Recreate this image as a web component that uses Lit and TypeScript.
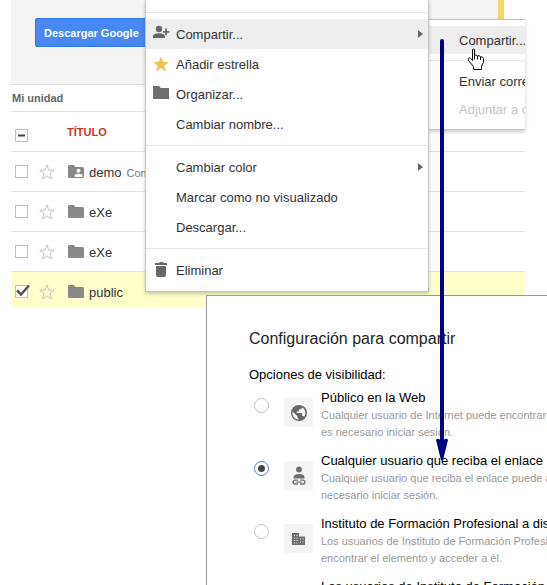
import { LitElement, html, css, svg, nothing } from "lit";
import { customElement } from "lit/decorators.js";
import { classMap } from "lit/directives/class-map.js";

const FOLDER = "M0 1.5Q0 0 1.5 0H5.5L7.5 2H14.500Q16 2 16 3.500V11.500Q16 13 14.500 13H1.500Q0 13 0 11.500Z";

const folder = html`<svg class="folder" viewBox="0 0 16 13" width="16" height="13"><path d=${FOLDER} /></svg>`;

const sharedFolder = html`<svg class="folder" viewBox="0 0 16 13" width="16" height="13">
  <path d=${FOLDER} />
  <circle cx="10.500" cy="5.800" r="2" fill="#fff" />
  <path d="M6.500 12V11Q6.500 8.800 10.500 8.800T14.500 11V12Z" fill="#fff" />
</svg>`;

const STAR = "M8 1L9.900 6.100L15.300 6.300L11 9.700L12.500 15L8 11.900L3.500 15L5 9.700L.7 6.300L6.100 6.100Z";

const icons: Record<string, unknown> = {
  share: svg`<g fill="#686868"><circle cx="6" cy="3" r="3.200"/><path d="M0 12V10.500C0 8 3.500 7.300 6 7.300S12 8 12 10.500V12Z"/><path d="M12.200 2.500H14V5H16.500V6.800H14V9.200H12.200V6.800H10V5H12.200Z"/></g>`,
  star: svg`<path d=${STAR} fill="#eec556" stroke="#eec556" stroke-width=".6"/>`,
  folder: svg`<path d="M0 0H6L8 2H16V13H0Z" fill="#6e6e6e"/>`,
  trash: svg`<path d="M2 1H6L7 0H10L11 1H14V3H2ZM3 4H13V13Q13 15 11 15H5Q3 15 3 13Z" fill="#686868"/>`,
  globe: svg`<circle cx="8" cy="8" r="8" fill="#666"/><path d="M1.600 6.500L6.500 11.200V12.500Q6.800 13.400 7.500 13.600V14.600Q3.800 14.200 2 11Q1.100 8.800 1.600 6.500ZM10.300 1.900Q13 2.900 14.200 6Q15 9 13.300 11.800Q12.800 11 11.900 11H11.200V8.800Q11.200 8.100 10.400 8.100H5.700V6.500H7.200Q8 6.500 8 5.700V4.200H9.500Q10.900 4.100 10.900 2.700Z" fill="#f4f4f4"/>`,
  link: svg`<g fill="#6e6e6e"><circle cx="8" cy="1.500" r="2.900"/><path d="M2.500 10.500V9Q3 6 8 6T13.500 9V10.500Z"/></g><g fill="none" stroke="#6e6e6e" stroke-width="1.300"><path d="M7 12.200H4A1.900 1.900 0 0 0 4 16H7M9 12.200H12A1.900 1.900 0 0 1 12 16H9M5.500 14.100H10.500"/></g>`,
  building: svg`<path d="M1 2H8V5.500H14V14H1Z" fill="#6e6e6e"/><path d="M3 4h1v1h-1zM5.500 4h1v1h-1zM3 6.500h1v1h-1zM5.500 6.500h1v1h-1zM3 9h1v1h-1zM5.500 9h1v1h-1zM3 11.500h1v1h-1zM5.500 11.500h1v1h-1zM9 7.500h1v1h-1zM11.500 7.500h1v1h-1zM9 10.500h1v1h-1zM11.500 10.500h1v1h-1z" fill="#f4f4f4"/>`,
};

const icon = (name: string) =>
  html`<svg class="glyph" viewBox="0 0 16 16" width="16" height="16" aria-hidden="true">${icons[name]}</svg>`;

interface Item {
  label: string;
  icon?: string;
  more?: boolean;
  active?: boolean;
  disabled?: boolean;
}

const MENU: Item[][] = [
  [
    { label: "Compartir...", icon: "share", more: true, active: true },
    { label: "Añadir estrella", icon: "star" },
    { label: "Organizar...", icon: "folder" },
    { label: "Cambiar nombre..." },
  ],
  [
    { label: "Cambiar color", more: true },
    { label: "Marcar como no visualizado" },
    { label: "Descargar..." },
  ],
  [{ label: "Eliminar", icon: "trash" }],
];

const SUBMENU: Item[][] = [
  [{ label: "Compartir...", active: true }],
  [{ label: "Enviar correo a los colaboradores" }, { label: "Adjuntar a correo electrónico", disabled: true }],
];

const FILES = [
  { name: "demo", note: "Compartido", shared: true },
  { name: "eXe" },
  { name: "eXe" },
  { name: "public", selected: true },
];

const OPTIONS = [
  {
    icon: "globe",
    title: "Público en la Web",
    lines: ["Cualquier usuario de Internet puede encontrar el elemento", "es necesario iniciar sesión."],
  },
  {
    icon: "link",
    title: "Cualquier usuario que reciba el enlace",
    lines: ["Cualquier usuario que reciba el enlace puede acceder", "necesario iniciar sesión."],
    checked: true,
  },
  {
    icon: "building",
    title: "Instituto de Formación Profesional a distancia",
    lines: ["Los usuarios de Instituto de Formación Profesional", "encontrar el elemento y acceder a él."],
  },
  {
    icon: "link",
    title: "Los usuarios de Instituto de Formación Profesional",
    lines: ["Los usuarios de Instituto de Formación Profesional", "acceder a él."],
  },
];

@customElement("context-menu")
export class ContextMenu extends LitElement {
  static properties = { groups: { attribute: false }, compact: { type: Boolean, reflect: true } };
  declare groups: Item[][];
  declare compact: boolean;

  static styles = css`
    :host {
      display: block;
      box-sizing: border-box;
      background: #fff;
      border: 1px solid #c4c4c4;
      box-shadow: 0 2px 4px rgba(0, 0, 0, 0.2);
      overflow: hidden;
    }
    .group {
      padding: 6px 0;
    }
    .group + .group {
      border-top: 1px solid #e5e5e5;
    }
    .item {
      display: grid;
      grid-template-columns: 23px 1fr auto;
      align-items: center;
      width: 100%;
      height: 30px;
      padding: 0 5px 0 7px;
      border: 0;
      background: none;
      font: 13px "Liberation Sans", Arial, sans-serif;
      color: #333;
      text-align: left;
      white-space: nowrap;
    }
    :host([compact]) .item {
      height: 28px;
      grid-template-columns: 1fr;
      padding-left: 30px;
    }
    .item.active {
      background: #eee;
    }
    .item:disabled {
      color: #c4c4c4;
    }
    .glyph {
      display: block;
      overflow: visible;
    }
    .more {
      border: 4px solid transparent;
      border-left: 5px solid #666;
      border-right: 0;
    }
  `;

  render() {
    return this.groups.map(
      (group) => html`<div class="group">
        ${group.map(
          (item) => html`<button class=${classMap({ item: true, active: !!item.active })} ?disabled=${item.disabled}>
            ${this.compact ? nothing : html`<span>${item.icon ? icon(item.icon) : nothing}</span>`}
            <span>${item.label}</span>
            ${item.more ? html`<span class="more"></span>` : nothing}
          </button>`
        )}
      </div>`
    );
  }
}

@customElement("share-dialog")
export class ShareDialog extends LitElement {
  static styles = css`
    :host {
      display: block;
      box-sizing: border-box;
      background: #fff;
      border: 1px solid #999;
      border-width: 1px 0 0 1px;
      padding: 33px 0 0 42px;
      overflow: hidden;
      white-space: nowrap;
      color: #000;
    }
    h1 {
      margin: 0;
      font-size: 16px;
      line-height: 20px;
      font-weight: 400;
      color: #222;
    }
    fieldset {
      margin: 16px 0 0;
      padding: 0;
      border: 0;
      min-width: 0;
    }
    legend {
      padding: 0;
      font-size: 13px;
      line-height: 20px;
    }
    .option {
      display: grid;
      grid-template-columns: 35px 37px 1fr;
      height: 63px;
      padding-top: 4px;
      box-sizing: border-box;
    }
    input {
      appearance: none;
      width: 15px;
      height: 15px;
      margin: 9px 0 0 5px;
      border: 1px solid #c2c2c2;
      border-radius: 50%;
      background: #fff;
    }
    input:checked {
      border-color: #4d7fc9;
      background: radial-gradient(circle, #444 3px, #fff 4px);
    }
    .tile {
      display: grid;
      place-items: center;
      width: 29px;
      height: 29px;
      margin-top: 9px;
      background: #f4f4f4;
    }
    .glyph {
      display: block;
      overflow: visible;
    }
    .title {
      display: block;
      font-size: 13px;
      line-height: 18px;
    }
    .line {
      display: block;
      font-size: 11px;
      line-height: 17px;
      color: #999;
    }
  `;

  render() {
    return html`
      <h1>Configuración para compartir</h1>
      <fieldset>
        <legend>Opciones de visibilidad:</legend>
        ${OPTIONS.map(
          (o) => html`<label class="option">
            <input type="radio" name="visibility" .checked=${!!o.checked} />
            <span class="tile">${icon(o.icon)}</span>
            <span><span class="title">${o.title}</span>${o.lines.map((l) => html`<span class="line">${l}</span>`)}</span>
          </label>`
        )}
      </fieldset>
    `;
  }
}

@customElement("app-root")
export class AppRoot extends LitElement {
  static styles = css`
    :host {
      display: block;
      position: relative;
      height: 100vh;
      overflow: hidden;
      background: #fff;
      font-family: "Liberation Sans", Arial, sans-serif;
      font-size: 13px;
      color: #333;
    }
    .page {
      margin: 0 22px 0 11px;
    }
    .promo {
      display: flex;
      align-items: center;
      box-sizing: border-box;
      height: 85px;
      margin-right: 21px;
      padding: 0 0 19px 24px;
      background: #f4f4f4;
      border-right: 6px solid #f5d76c;
      border-bottom: 1px solid #ddd;
    }
    .download {
      height: 29px;
      padding: 0 24px 0 8px;
      border: 1px solid #3079ed;
      border-radius: 2px;
      background: #4788f4;
      color: #fff;
      font: bold 11px "Liberation Sans", Arial, sans-serif;
      white-space: nowrap;
    }
    h2 {
      margin: 0;
      padding-left: 1px;
      font-size: 11px;
      line-height: 26px;
      color: #666;
    }
    table {
      width: 100%;
      border-collapse: collapse;
      table-layout: fixed;
    }
    tr {
      height: 40px;
    }
    th,
    td {
      box-sizing: border-box;
      padding: 0;
      border-top: 1px solid #e0e0e0;
      text-align: left;
    }
    th {
      font-size: 11px;
      color: #c53727;
    }
    .pick {
      width: 27px;
      padding-left: 4px;
    }
    th.pick {
      padding-top: 7px;
    }
    .fav {
      width: 29px;
      padding-left: 1px;
    }
    .selected {
      background: #ffffcb;
      height: 36px;
    }
    .selected td {
      padding-top: 4px;
    }
    input {
      appearance: none;
      display: block;
      box-sizing: border-box;
      width: 13px;
      height: 13px;
      margin: 0;
      border: 1px solid #c0c0c0;
      background: #fff;
    }
    .box {
      display: grid;
      width: 15px;
    }
    .box > * {
      grid-area: 1 / 1;
    }
    .box svg {
      overflow: visible;
      pointer-events: none;
    }
    .star {
      display: block;
      border: 0;
      padding: 0;
      background: none;
    }
    svg {
      display: block;
    }
    .folder {
      fill: #888;
    }
    .name {
      display: flex;
      align-items: flex-start;
      gap: 5px;
      padding: 2px 0 0 1px;
      line-height: 16px;
    }
    .note {
      font-size: 11px;
      color: #777;
    }
    context-menu,
    share-dialog,
    .pointer,
    .arrow {
      position: absolute;
    }
    .submenu {
      top: 19px;
      left: 428px;
      right: 22px;
      border-right: 0;
    }
    .main {
      top: 0;
      left: 145px;
      width: 284px;
      border-top: 0;
    }
    share-dialog {
      top: 295px;
      left: 206px;
      right: 0;
      bottom: 0;
    }
    .arrow {
      top: 38px;
      left: 435px;
    }
    .pointer {
      top: 48px;
      left: 467px;
    }
  `;

  render() {
    return html`
      <main class="page">
        <div class="promo"><button class="download">Descargar Google</button></div>
        <h2>Mi unidad</h2>
        <table>
          <thead>
            <tr>
              <th class="pick">
                <span class="box"><input type="checkbox" aria-label="Seleccionar todo" />
                  <svg width="13" height="13"><path d="M3 6.500H10" stroke="#444" stroke-width="2" /></svg></span>
              </th>
              <th class="fav"></th>
              <th>TÍTULO</th>
            </tr>
          </thead>
          <tbody>
            ${FILES.map(
              (f) => html`<tr class=${classMap({ selected: !!f.selected })}>
                <td class="pick">
                  <span class="box"><input type="checkbox" aria-label=${f.name} .checked=${!!f.selected} />
                    ${f.selected
                      ? html`<svg width="13" height="13"><path d="M2 5.500L6 9.500L14 .5" fill="none" stroke="#555" stroke-width="2.500" /></svg>`
                      : nothing}</span>
                </td>
                <td class="fav">
                  <button class="star" aria-label="Destacar">
                    <svg width="16" height="16"><path d=${STAR} fill="none" stroke="#c4c4c4" /></svg>
                  </button>
                </td>
                <td>
                  <div class="name">
                    ${f.shared ? sharedFolder : folder}<span>${f.name}</span>
                    ${f.note ? html`<span class="note">${f.note}</span>` : nothing}
                  </div>
                </td>
              </tr>`
            )}
          </tbody>
        </table>
      </main>
      <context-menu class="submenu" compact .groups=${SUBMENU}></context-menu>
      <context-menu class="main" .groups=${[[], ...MENU]}></context-menu>
      <share-dialog></share-dialog>
      <svg class="arrow" width="14" height="424" aria-hidden="true">
        <path d="M7 3V408" stroke="#000080" stroke-width="4" stroke-linecap="round" />
        <path d="M1 402Q2 400 4 401L7 403L10 401Q12 400 13 402L8 422H6Z" fill="#000080" />
      </svg>
      <svg class="pointer" width="18" height="22" viewBox="0 0 18 22" aria-hidden="true">
        <path
          d="M5.500 1.500Q6.500 .5 7.500 1.500V7.500Q9 6 10.500 8Q12 6.800 13.500 8.800Q15.500 8.300 16.500 10.500V14.500L14.500 18V21.500H6.500V18.500L1.500 12.500Q.5 10.500 2 9.800Q3.500 9.500 5.500 12.500ZM7.500 7.500V11.500M10.500 8V11.500M13.500 9V12"
          fill="#fff"
          stroke="#000"
        />
      </svg>
    `;
  }
}
